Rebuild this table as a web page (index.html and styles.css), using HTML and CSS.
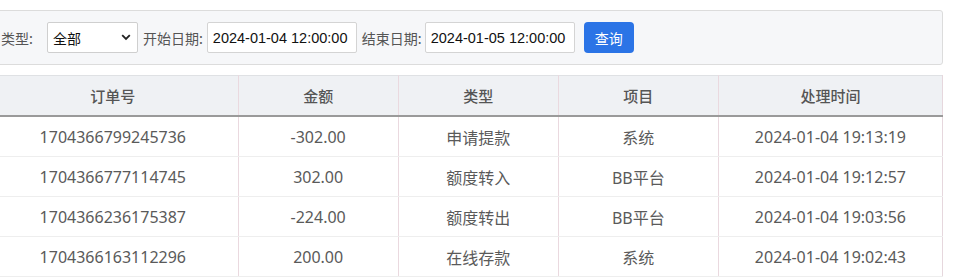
FILE: index.html
```html
<!DOCTYPE html>
<html lang="zh-CN">
<head>
<meta charset="utf-8">
<title>资金记录</title>
<link rel="stylesheet" href="styles.css">
</head>
<body>
<div class="page">
  <form class="filter">
    <label class="lbl lbl-first">类型:</label>
    <div class="select">
      <span>全部</span>
      <svg class="chev" width="10" height="7" viewBox="0 0 10 7"><path d="M1.2 1.2 L5 5 L8.8 1.2" fill="none" stroke="#222" stroke-width="1.8"/></svg>
    </div>
    <label class="lbl">开始日期:</label>
    <div class="input">2024-01-04 12:00:00</div>
    <label class="lbl lbl-end">结束日期:</label>
    <div class="input">2024-01-05 12:00:00</div>
    <button type="button" class="btn">查询</button>
  </form>
  <table class="grid">
    <colgroup>
      <col class="c1"><col class="c2"><col class="c3"><col class="c4"><col class="c5">
    </colgroup>
    <thead>
      <tr><th>订单号</th><th>金额</th><th>类型</th><th>项目</th><th>处理时间</th></tr>
    </thead>
    <tbody>
      <tr><td>1704366799245736</td><td>-302.00</td><td>申请提款</td><td>系统</td><td>2024-01-04 19:13:19</td></tr>
      <tr><td>1704366777114745</td><td>302.00</td><td>额度转入</td><td>BB平台</td><td>2024-01-04 19:12:57</td></tr>
      <tr><td>1704366236175387</td><td>-224.00</td><td>额度转出</td><td>BB平台</td><td>2024-01-04 19:03:56</td></tr>
      <tr><td>1704366163112296</td><td>200.00</td><td>在线存款</td><td>系统</td><td>2024-01-04 19:02:43</td></tr>
    </tbody>
  </table>
</div>
</body>
</html>
```
FILE: styles.css
```css
html, body {
  margin: 0;
  padding: 0;
  background: #ffffff;
  overflow: hidden;
}
body {
  font-family: "Noto Sans", "Noto Sans CJK SC", sans-serif;
  color: #555;
}
.page {
  width: 955px;
  margin-left: -12px;
  padding-top: 10px;
}
.filter {
  display: flex;
  align-items: center;
  height: 53px;
  margin: 0;
  padding: 0 0 0 12px;
  background: #f6f7f9;
  border: 1px solid #dcdcdc;
  border-radius: 3px;
  box-sizing: content-box;
}
.lbl {
  font-family: "Noto Sans CJK SC", sans-serif;
  font-size: 14px;
  color: #555;
  margin-right: 4px;
  margin-left: 5px;
  white-space: nowrap;
}
.lbl-first {
  margin-left: 0;
  margin-right: 14px;
}
.lbl-end {
  margin-right: 3px;
}
.select {
  width: 91px;
  height: 31px;
  box-sizing: border-box;
  border: 1px solid #cfcfcf;
  border-radius: 2px;
  background: #fff;
  display: flex;
  align-items: center;
  justify-content: space-between;
  padding: 0 6px 0 5px;
  font-family: "Noto Sans CJK SC", sans-serif;
  font-size: 14px;
  color: #111;
}
.input {
  width: 150px;
  height: 31px;
  box-sizing: border-box;
  border: 1px solid #d4d4d4;
  border-radius: 2px;
  background: #fff;
  display: flex;
  align-items: center;
  padding-left: 5px;
  font-family: "Liberation Sans", Arial, sans-serif;
  font-size: 14.5px;
  color: #111;
}
.btn {
  margin-left: 9px;
  width: 50px;
  height: 31px;
  border: none;
  border-radius: 4px;
  background: #2b74e6;
  color: #fff;
  font-family: "Noto Sans CJK SC", sans-serif;
  font-size: 14px;
  padding: 0;
}
.grid {
  margin-top: 10px;
  width: 955px;
  border-collapse: collapse;
  table-layout: fixed;
  border-top: 1px solid #dfe1e4;
  border-right: 1px solid #e6d7dd;
}
.c1 { width: 250px; }
.c2, .c3, .c4 { width: 160px; }
.c5 { width: 224px; }
.grid th {
  height: 39px;
  background: #eff1f4;
  font-family: "Noto Sans CJK SC", sans-serif;
  font-size: 15px;
  font-weight: 500;
  color: #555;
  border-left: 1px solid #ead9df;
  border-bottom: 2px solid #9a9a9a;
  padding: 0;
}
.grid td {
  height: 39px;
  text-align: center;
  font-size: 16px;
  color: #5a5a5a;
  border-left: 1px solid #ead9df;
  border-bottom: 1px solid #eeeeee;
  padding: 0;
}
.grid th:first-child, .grid td:first-child { border-left: none; }
```
